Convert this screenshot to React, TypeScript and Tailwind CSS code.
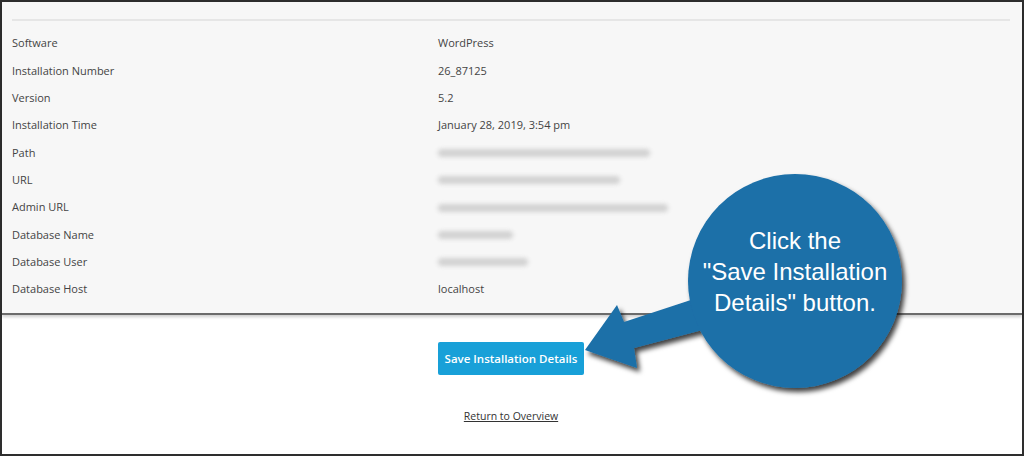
import React from "react";

const rows: { label: string; value?: string; blur?: number }[] = [
  { label: "Software", value: "WordPress" },
  { label: "Installation Number", value: "26_87125" },
  { label: "Version", value: "5.2" },
  { label: "Installation Time", value: "January 28, 2019, 3:54 pm" },
  { label: "Path", blur: 212 },
  { label: "URL", blur: 182 },
  { label: "Admin URL", blur: 230 },
  { label: "Database Name", blur: 75 },
  { label: "Database User", blur: 90 },
  { label: "Database Host", value: "localhost" },
];

function Callout() {
  return (
    <>
      <svg
        className="absolute left-0 top-0 pointer-events-none"
        width="1024"
        height="456"
        viewBox="0 0 1024 456"
      >
        <defs>
          <filter id="drop" x="-20%" y="-20%" width="140%" height="140%">
            <feDropShadow dx="3" dy="4" stdDeviation="2.5" floodColor="#000" floodOpacity="0.75" />
          </filter>
        </defs>
        <g filter="url(#drop)">
          <polygon
            points="585,350 617,305 624,322 700,297 710,328 634,348 637,368"
            fill="#1b6fa8"
          />
          <circle cx="795" cy="281" r="107" fill="#1b6fa8" />
        </g>
      </svg>
      <div className="absolute left-[690px] top-[225px] w-[210px] text-center text-white text-[24px] leading-[31px] font-['Liberation_Sans',Arial,sans-serif]">
        Click the
        <br />
        "Save Installation
        <br />
        Details" button.
      </div>
    </>
  );
}

export default function App() {
  return (
    <div className="relative w-[1024px] h-[456px] overflow-hidden bg-white font-['Open_Sans',sans-serif]">
      <div className="w-full h-full border-2 border-[#2e2e2e] flex flex-col">
        {/* details panel */}
        <div className="h-[313px] bg-[#f7f7f7] border-b-2 border-[#6b6b6b] shadow-[0_2px_3px_rgba(0,0,0,0.2)] pt-[17px] pl-[10px] pr-[12px] flex flex-col">
          <div className="h-[2px] bg-[#e6e6e6]" />
          <div className="mt-[9px] flex flex-col">
            {rows.map((r) => (
              <div key={r.label} className="h-[27.33px] flex items-center text-[11px] text-[#444]">
                <div className="w-[426px]">{r.label}</div>
                {r.value ? (
                  <div>{r.value}</div>
                ) : (
                  <div
                    className="h-[8px] rounded-full bg-[#d2d2d2] blur-[2px]"
                    style={{ width: r.blur }}
                  />
                )}
              </div>
            ))}
          </div>
        </div>

        {/* actions */}
        <div className="flex flex-col items-center pr-[2px] pt-[27px]">
          <button className="w-[146px] h-[33px] rounded-[2px] bg-[#18a0d8] text-white text-[11.5px] font-semibold">
            Save Installation Details
          </button>
          <a href="#" className="mt-[34px] text-[10.5px] text-[#333] underline">
            Return to Overview
          </a>
        </div>
      </div>
      <Callout />
    </div>
  );
}
